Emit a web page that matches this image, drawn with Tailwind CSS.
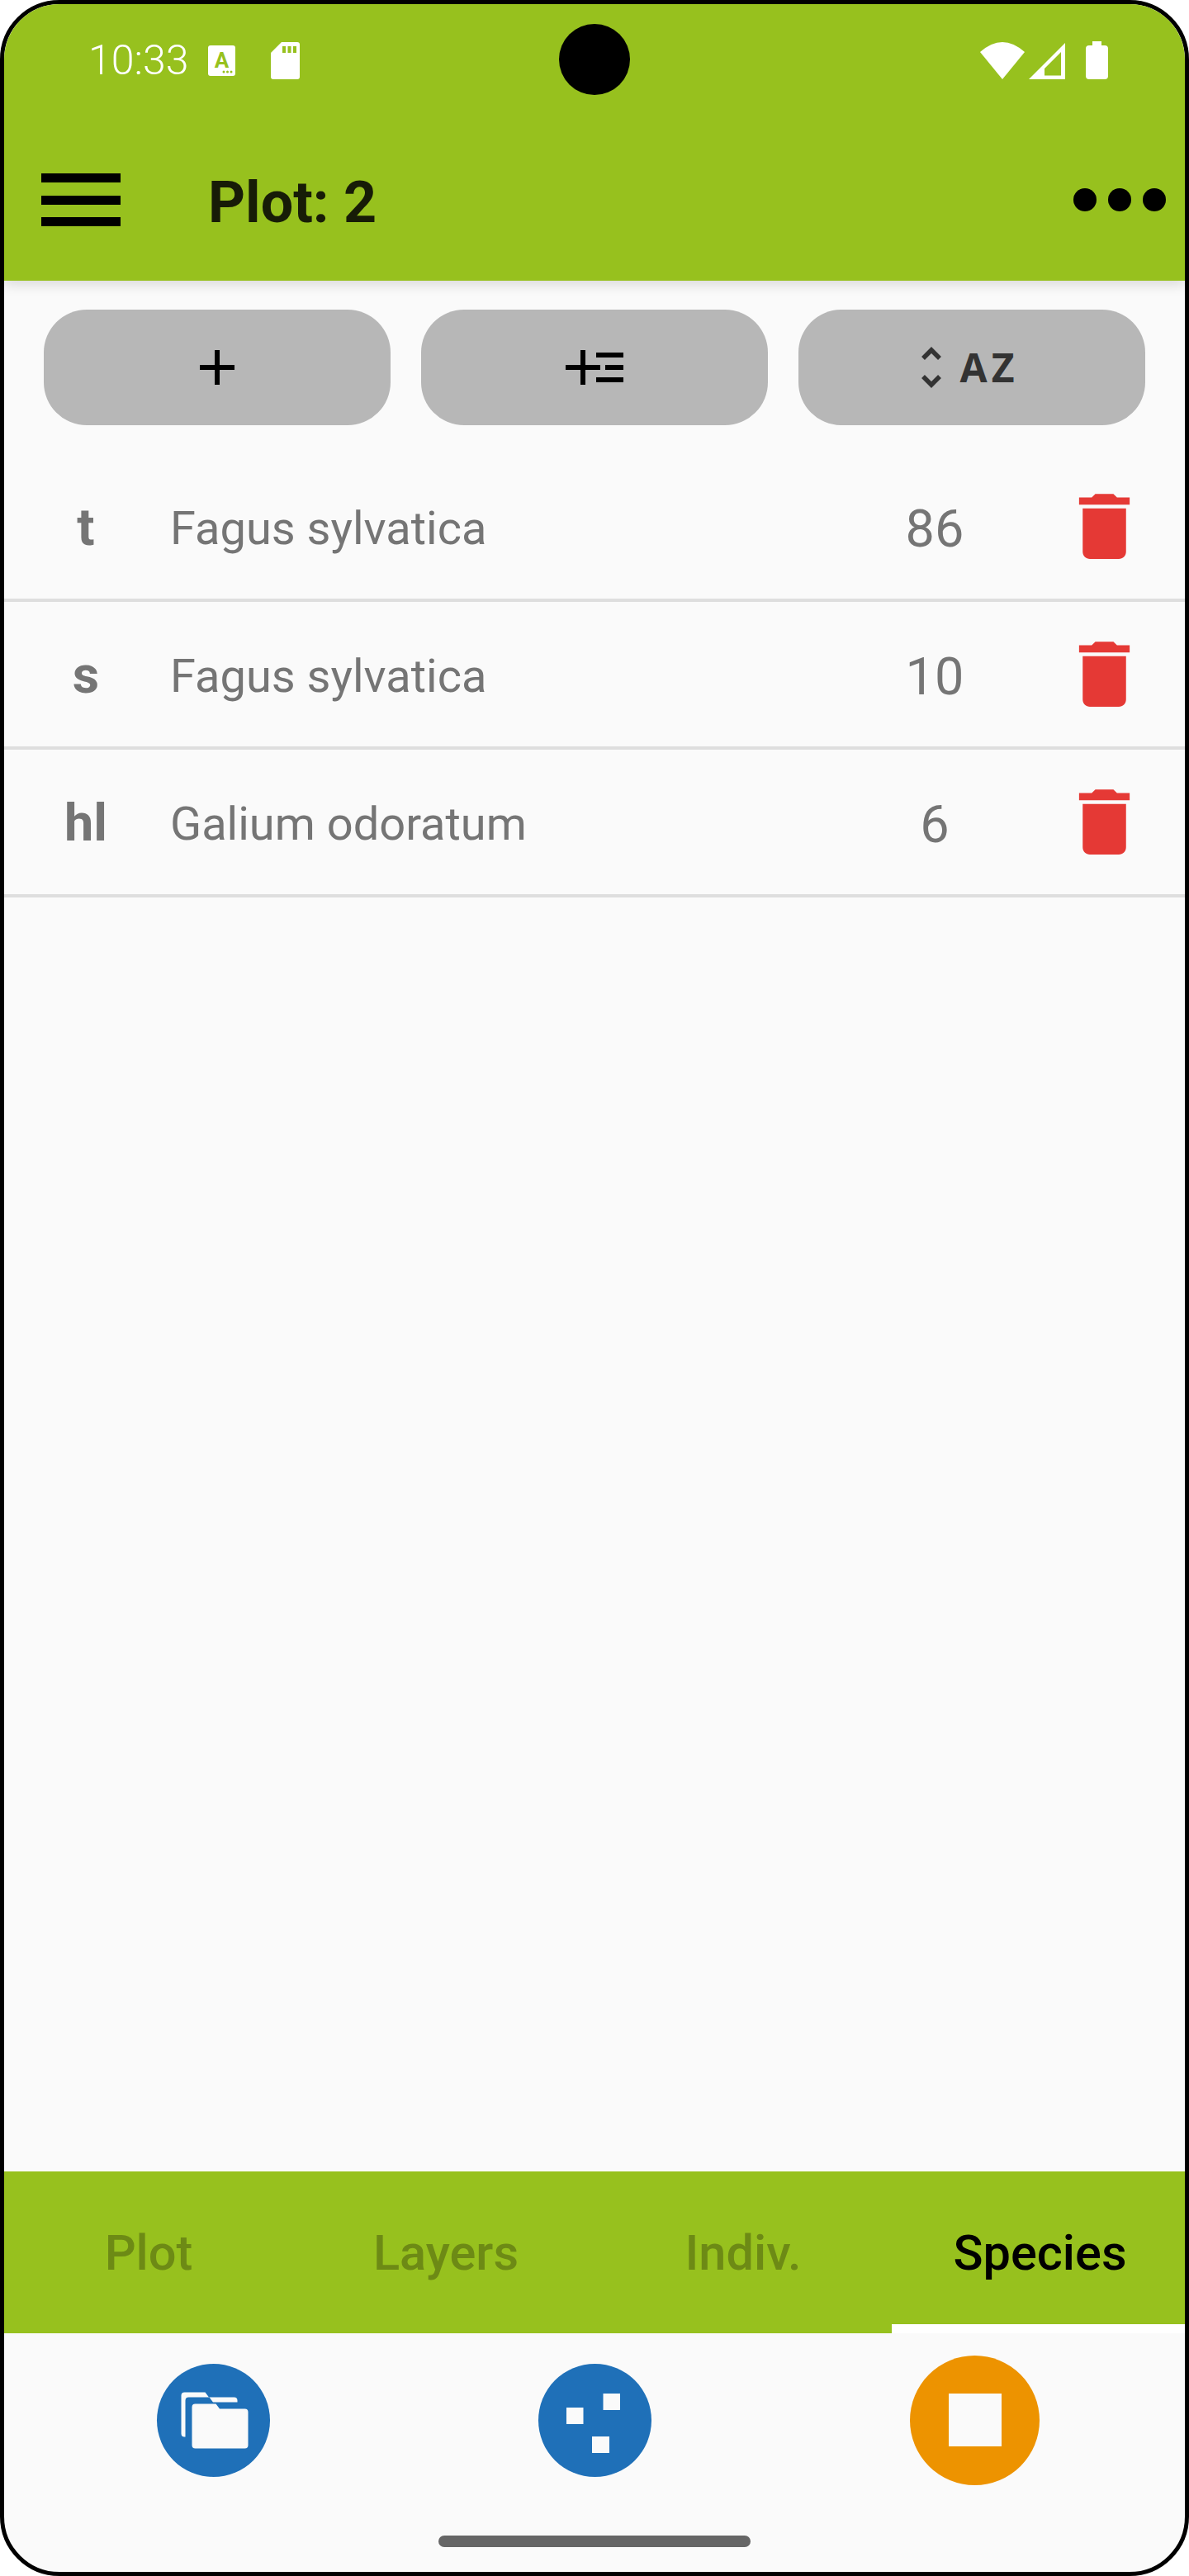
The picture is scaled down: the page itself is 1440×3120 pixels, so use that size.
<!DOCTYPE html>
<html lang="en">
<head>
  <meta charset="UTF-8" />
  <meta name="viewport" content="width=device-width, initial-scale=1.0"/>
  <title>Plot: 2</title>
  <script src="https://cdn.jsdelivr.net/npm/@tailwindcss/browser@4"></script>
</head>
<body class="bg-white">
  <div class="relative flex flex-col w-[1440px] h-[3120px] border-[5px] border-black rounded-[72px] overflow-hidden bg-[#fafafa] font-[Roboto,sans-serif]">

    <!-- camera -->
    <div class="absolute z-30 left-[672px] top-[24px] w-[86px] h-[86px] rounded-full bg-black"></div>

    <!-- status bar -->
    <div class="relative z-20 flex items-center justify-between h-[139px] pb-[3px] pl-[102px] pr-[93px] bg-[#97c11e]">
      <div class="flex items-center">
        <span class="text-[50px] leading-none font-light text-white">10:33</span>
        <svg class="ml-[24px]" width="33" height="37" viewBox="0 0 33 37">
          <rect width="33" height="37" rx="3" fill="#fff"/>
          <text x="16.5" y="27" text-anchor="middle" font-family="Roboto" font-weight="700" font-size="26" fill="#97c11e">A</text>
          <circle cx="19" cy="32" r="1.5" fill="#97c11e"/>
          <circle cx="23.5" cy="32" r="1.5" fill="#97c11e"/>
          <circle cx="28" cy="32" r="1.5" fill="#97c11e"/>
        </svg>
        <svg class="ml-[43px]" width="35" height="45" viewBox="0 0 35 45">
          <path d="M13 0H32a3 3 0 0 1 3 3V42a3 3 0 0 1-3 3H3a3 3 0 0 1-3-3V13z" fill="#fff"/>
          <path d="M14 5h4v8h-4zM20.500 5h4v8h-4zM27 5h4v8h-4z" fill="#97c11e"/>
        </svg>
      </div>
      <div class="flex items-end">
        <svg width="54" height="45" viewBox="0 0 54 45"><path d="M0 12Q27-12 54 12L27 45z" fill="#fff"/></svg>
        <svg class="ml-[5px]" width="44" height="44" viewBox="0 0 44 44"><path fill-rule="evenodd" d="M0 44L44 0V44zM19 39.500H39V11L19 31z" fill="#fff"/></svg>
        <svg class="ml-[25px]" width="27" height="46" viewBox="0 0 27 46"><path d="M8 0H19V5H23a4 4 0 0 1 4 4V42a4 4 0 0 1-4 4H4a4 4 0 0 1-4-4V9a4 4 0 0 1 4-4H8z" fill="#fff"/></svg>
      </div>
    </div>

    <!-- toolbar -->
    <div class="relative z-10 flex items-center h-[196px] pl-[45px] pr-[23px] bg-[#97c11e] shadow-[0_5px_14px_rgba(0,0,0,0.13)]">
      <div class="flex flex-col gap-[15.500px] w-[96px]">
        <div class="h-[11px] bg-black"></div>
        <div class="h-[11px] bg-black"></div>
        <div class="h-[11px] bg-black"></div>
      </div>
      <h1 class="ml-[106px] mt-[6px] text-[70px] leading-none font-bold text-[#171c07]">Plot: 2</h1>
      <div class="ml-auto flex gap-[14px]">
        <div class="w-[28px] h-[28px] rounded-full bg-black"></div>
        <div class="w-[28px] h-[28px] rounded-full bg-black"></div>
        <div class="w-[28px] h-[28px] rounded-full bg-black"></div>
      </div>
    </div>

    <!-- action buttons -->
    <div class="flex gap-[37px] px-[48px] pt-[35px] pb-[35px]">
      <button class="flex flex-1 items-center justify-center h-[140px] rounded-[52px] bg-[#b7b7b7]">
        <svg width="42" height="42" viewBox="0 0 42 42"><path d="M21 0V42M0 21H42" stroke="#000" stroke-width="6" fill="none"/></svg>
      </button>
      <button class="flex flex-1 items-center justify-center h-[140px] rounded-[52px] bg-[#b7b7b7]">
        <svg width="70" height="42" viewBox="0 0 70 42"><path d="M21 0V42M0 21H42M37 6H70M48 21H70M37 36H70" stroke="#000" stroke-width="6" fill="none"/></svg>
      </button>
      <button class="flex flex-1 items-center justify-center h-[140px] rounded-[52px] bg-[#b7b7b7]">
        <div class="flex items-center gap-[22px] mr-[6px]">
          <svg width="26" height="50" viewBox="0 0 26 50"><path d="M3 14L13 4L23 14M3 36L13 46L23 36" stroke="#333" stroke-width="5.500" fill="none"/></svg>
          <span class="font-['Open_Sans',sans-serif] text-[48px] leading-none font-bold tracking-[5px] text-[#333]">AZ</span>
        </div>
      </button>
    </div>

    <!-- species list -->
    <div class="flex-1">
      <div class="flex items-center h-[179px] border-b-[4px] border-[#dedede] text-[#757575]">
        <span class="w-[198px] pt-[4px] text-center text-[63px] font-bold">t</span>
        <span class="flex-1 ml-[3px] pt-[4px] text-[56px]">Fagus sylvatica</span>
        <span class="w-[130px] pt-[8px] text-center text-[63px]">86</span>
        <svg class="ml-[88px] mr-[45px]" width="105" height="105" viewBox="0 0 24 24"><path fill="#e53935" d="M6 19c0 1.100.9 2 2 2h8c1.100 0 2-.9 2-2V7H6v12zM19 4h-3.500l-1-1h-5l-1 1H5v2h14V4z"/></svg>
      </div>
      <div class="flex items-center h-[179px] border-b-[4px] border-[#dedede] text-[#757575]">
        <span class="w-[198px] pt-[4px] text-center text-[63px] font-bold">s</span>
        <span class="flex-1 ml-[3px] pt-[4px] text-[56px]">Fagus sylvatica</span>
        <span class="w-[130px] pt-[8px] text-center text-[63px]">10</span>
        <svg class="ml-[88px] mr-[45px]" width="105" height="105" viewBox="0 0 24 24"><path fill="#e53935" d="M6 19c0 1.100.9 2 2 2h8c1.100 0 2-.9 2-2V7H6v12zM19 4h-3.500l-1-1h-5l-1 1H5v2h14V4z"/></svg>
      </div>
      <div class="flex items-center h-[179px] border-b-[4px] border-[#dedede] text-[#757575]">
        <span class="w-[198px] pt-[4px] text-center text-[63px] font-bold">hl</span>
        <span class="flex-1 ml-[3px] pt-[4px] text-[56px]">Galium odoratum</span>
        <span class="w-[130px] pt-[8px] text-center text-[63px]">6</span>
        <svg class="ml-[88px] mr-[45px]" width="105" height="105" viewBox="0 0 24 24"><path fill="#e53935" d="M6 19c0 1.100.9 2 2 2h8c1.100 0 2-.9 2-2V7H6v12zM19 4h-3.500l-1-1h-5l-1 1H5v2h14V4z"/></svg>
      </div>
    </div>

    <!-- tabs -->
    <div class="flex h-[196px] pt-[3px] bg-[#97c11e] text-[59.500px] font-medium text-[#6d8a15]">
      <div class="flex items-center justify-center w-[355px] pr-[5px]">Plot</div>
      <div class="flex items-center justify-center w-[360px]">Layers</div>
      <div class="flex items-center justify-center w-[360px]">Indiv.</div>
      <div class="relative flex items-center justify-center w-[355px] pl-[4px] text-black">
        Species
        <div class="absolute left-0 right-0 bottom-0 h-[11px] bg-white"></div>
      </div>
    </div>

    <!-- bottom actions -->
    <div class="flex items-center h-[210px] pl-[185px]">
      <div class="w-[137px] h-[137px] rounded-full bg-[#1f70b8]">
        <svg width="137" height="137" viewBox="0 0 137 137">
          <defs><path id="folder" d="M4 0H29L33.500 6H64a4 4 0 0 1 4 4V50a4 4 0 0 1-4 4H4a4 4 0 0 1-4-4V4a4 4 0 0 1 4-4z"/></defs>
          <use href="#folder" x="29.500" y="34.500" fill="#fafafa"/>
          <use href="#folder" x="34.500" y="40.500" fill="#1f70b8"/>
          <use href="#folder" x="42.500" y="48.500" fill="#fafafa"/>
        </svg>
      </div>
      <div class="ml-[325px] w-[137px] h-[137px] rounded-full bg-[#1f70b8]">
        <svg width="137" height="137" viewBox="0 0 137 137">
          <rect x="34" y="53" width="20.500" height="20" fill="#fafafa"/>
          <rect x="78.500" y="36" width="20.500" height="20" fill="#fafafa"/>
          <rect x="65" y="88" width="21" height="20" fill="#fafafa"/>
        </svg>
      </div>
      <div class="flex items-center justify-center ml-[313px] w-[157px] h-[157px] rounded-full bg-[#ed9300]">
        <div class="w-[64px] h-[64px] bg-[#fafafa]"></div>
      </div>
    </div>
    <div class="mx-auto mt-[35px] mb-[30px] w-[378px] h-[14px] rounded-full bg-[#666]"></div>
  </div>
</body>
</html>
